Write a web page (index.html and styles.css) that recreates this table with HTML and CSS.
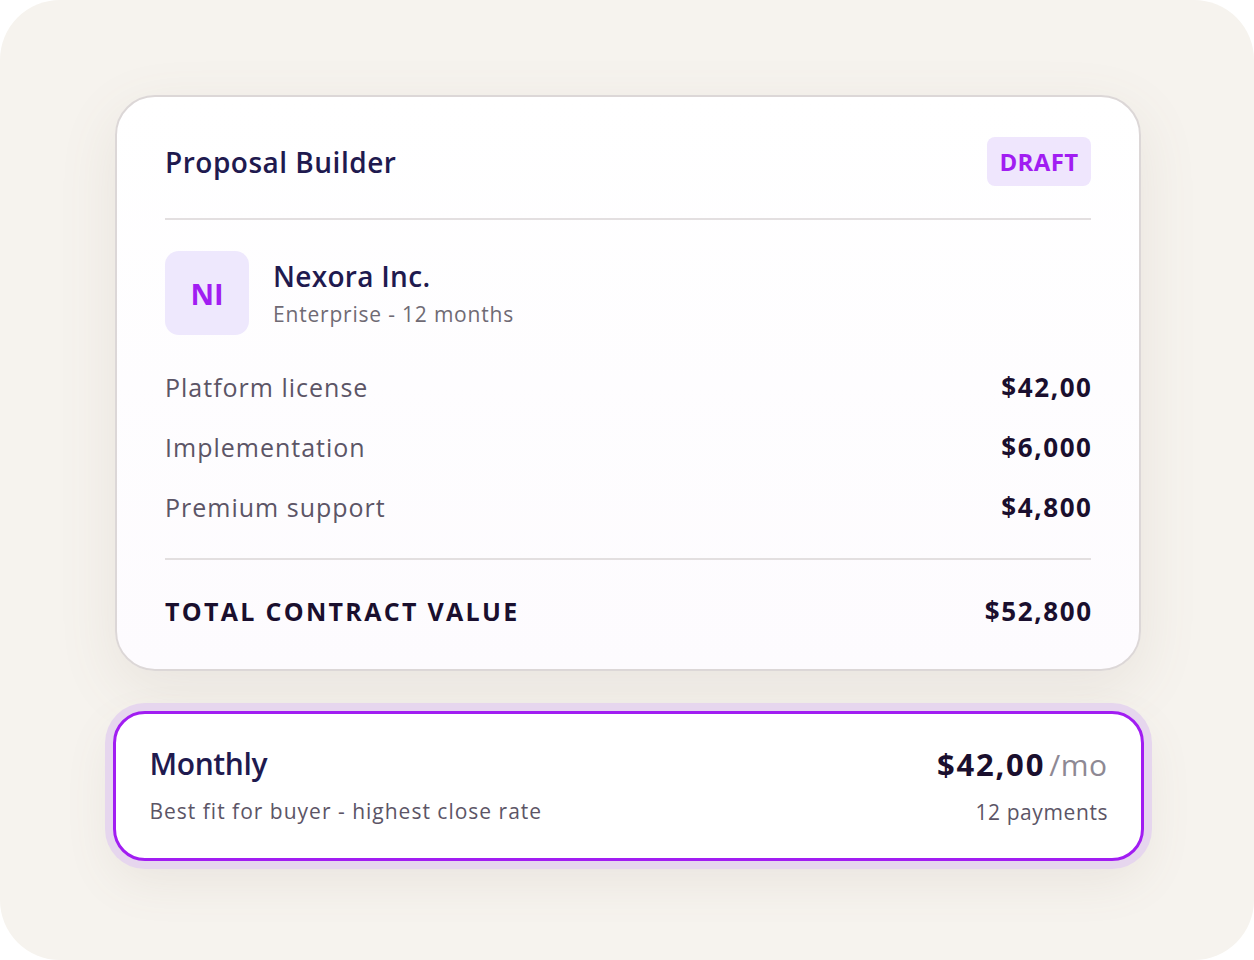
FILE: index.html
```html
<!DOCTYPE html>
<html lang="en">
<head>
<meta charset="utf-8">
<title>Proposal Builder</title>
<link rel="stylesheet" href="styles.css">
</head>
<body>
<div class="frame">
  <section class="card">
    <header class="card-head">
      <h1 class="title">Proposal Builder</h1>
      <span class="badge">DRAFT</span>
    </header>
    <hr class="divider">
    <div class="client">
      <div class="avatar">NI</div>
      <div class="client-info">
        <div class="client-name">Nexora Inc.</div>
        <div class="client-sub">Enterprise - 12 months</div>
      </div>
    </div>
    <div class="items">
      <div class="row"><span class="label">Platform license</span><span class="value">$42,00</span></div>
      <div class="row"><span class="label">Implementation</span><span class="value">$6,000</span></div>
      <div class="row"><span class="label">Premium support</span><span class="value">$4,800</span></div>
    </div>
    <hr class="divider divider-total">
    <div class="row total"><span class="total-label">TOTAL CONTRACT VALUE</span><span class="value">$52,800</span></div>
  </section>

  <section class="plan">
    <div class="plan-left">
      <div class="plan-name">Monthly</div>
      <div class="plan-desc">Best fit for buyer - highest close rate</div>
    </div>
    <div class="plan-right">
      <div class="plan-price"><span class="price">$42,00</span><span class="per">/mo</span></div>
      <div class="plan-desc plan-count">12 payments</div>
    </div>
  </section>
</div>
</body>
</html>
```
FILE: styles.css
```css
* { box-sizing: border-box; }
html, body { margin: 0; padding: 0; background: #ffffff; }
body { font-family: "Open Sans", "Noto Sans", sans-serif; }

.frame {
  width: 1254px;
  height: 960px;
  background: #f6f3ee;
  border-radius: 60px;
  display: flex;
  flex-direction: column;
  align-items: center;
  padding-top: 95px;
  padding-left: 2px;
}

.card {
  width: 1026px;
  height: 576px;
  background: linear-gradient(#ffffff, #fdfbfe);
  border: 2px solid #dcd7d7;
  border-radius: 40px;
  padding: 40px 48px 28px 48px;
  box-shadow: 0 18px 60px rgba(130, 110, 90, 0.11);
  display: flex;
  flex-direction: column;
}

.card-head {
  display: flex;
  justify-content: space-between;
  align-items: center;
  height: 49px;
}
.title {
  margin: 0;
  font-size: 28px;
  font-weight: 600;
  color: #1f1a4f;
  letter-spacing: 0.5px;
}
.badge {
  background: #efe6fd;
  color: #a11df2;
  font-weight: 700;
  font-size: 24px;
  letter-spacing: 0.4px;
  height: 49px;
  width: 104px;
  border-radius: 8px;
  display: flex;
  align-items: center;
  justify-content: center;
}

.divider {
  margin: 0;
  border: 0;
  height: 2px;
  background: #e3dfe0;
}
.card-head + .divider { margin-top: 32px; }

.client {
  display: flex;
  margin-top: 31px;
  gap: 24px;
}
.avatar {
  width: 84px;
  height: 84px;
  border-radius: 14px;
  background: #eee8fd;
  color: #a11df2;
  font-weight: 700;
  font-size: 29px;
  display: flex;
  align-items: center;
  justify-content: center;
}
.client-info {
  padding-top: 8px;
  display: flex;
  flex-direction: column;
  gap: 6px;
}
.client-name {
  font-size: 28px;
  line-height: 34px;
  font-weight: 600;
  color: #1f1a4f;
  letter-spacing: 0.3px;
}
.client-sub {
  font-size: 21px;
  line-height: 30px;
  color: #6f6a74;
  letter-spacing: 0.8px;
}

.items { margin-top: 22px; }
.row {
  display: flex;
  justify-content: space-between;
  align-items: center;
  height: 60px;
}
.label {
  font-size: 25px;
  color: #5c5566;
  letter-spacing: 1px;
}
.value {
  font-size: 26px;
  font-weight: 700;
  color: #1a0f2e;
  letter-spacing: 1.6px;
  margin-right: -1.6px;
}
.divider-total { margin-top: 21px; }
.total { margin-top: 21px; }
.total-label {
  font-size: 25px;
  font-weight: 700;
  letter-spacing: 2.3px;
  color: #1a0f2e;
}

.plan {
  margin-top: 40px;
  width: 1031px;
  height: 150px;
  background: #ffffff;
  border: 3px solid #a11df2;
  border-radius: 32px;
  box-shadow: 0 0 0 8px #e6d6ee, 0 18px 50px rgba(130, 110, 90, 0.11);
  padding: 30px 33px 32px 34px;
  display: flex;
  justify-content: space-between;
}
.plan-left, .plan-right {
  display: flex;
  flex-direction: column;
  gap: 12px;
}
.plan-right { align-items: flex-end; }
.plan-name {
  font-size: 30px;
  line-height: 40px;
  font-weight: 600;
  color: #1f1a4f;
  letter-spacing: -0.4px;
}
.plan-desc {
  font-size: 21px;
  line-height: 30px;
  color: #5c5566;
  letter-spacing: 1px;
}
.plan-count { letter-spacing: 0.6px; margin-right: -0.6px; }
.plan-price {
  line-height: 40px;
  display: flex;
  align-items: baseline;
  gap: 4px;
}
.price {
  font-size: 31px;
  font-weight: 700;
  color: #1a0f2e;
  letter-spacing: 1.8px;
}
.per {
  font-size: 30px;
  color: #8e8994;
  letter-spacing: 0.5px;
}
```
